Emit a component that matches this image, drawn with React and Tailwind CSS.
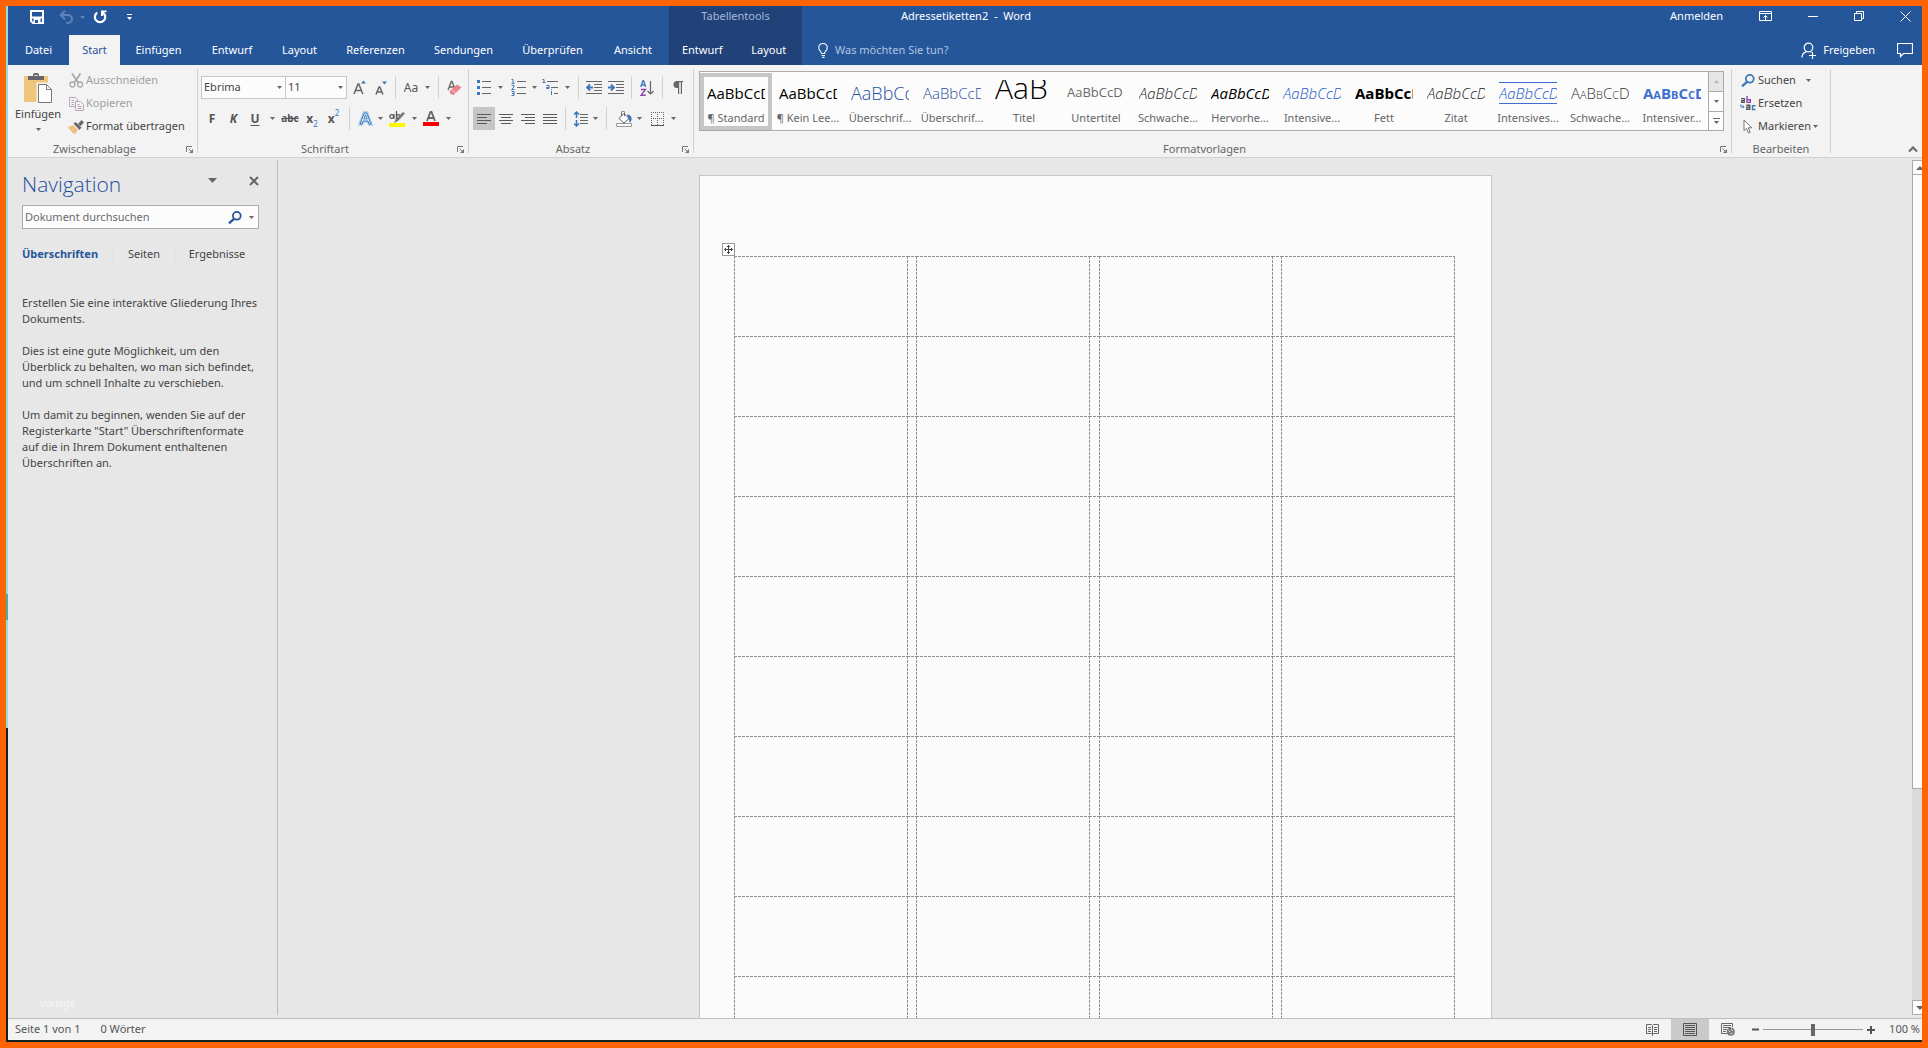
import React from 'react';

/* ---------- icons ---------- */

const Svg = ({ w = 16, h = 16, children, className = '' }) => (
  <svg width={w} height={h} viewBox={`0 0 ${w} ${h}`} fill="none" className={`shrink-0 ${className}`} aria-hidden="true">
    {children}
  </svg>
);

const Caret = ({ className = 'text-[#666]' }) => (
  <Svg w={5} h={3} className={className}>
    <path d="M0 0h5L2.5 3z" fill="currentColor" />
  </Svg>
);

const SaveIcon = () => (
  <Svg w={14} h={14}>
    <path d="M1 1h12v12H3l-2-2zM1.5 7.5h11" stroke="#fff" strokeWidth="2" />
    <path d="M3.500 8h7v5.500h-7z" fill="#fff" />
    <path d="M5 10h3v3H5z" fill="#26569a" />
  </Svg>
);

const UndoIcon = () => (
  <Svg w={15} h={14}>
    <path d="M1.500 5h7.500a4 4 0 0 1 0 8H7.500" stroke="#5f83b8" strokeWidth="2" />
    <path d="M6 .8 1.600 5 6 9.200" stroke="#5f83b8" strokeWidth="2" />
  </Svg>
);

const RedoIcon = () => (
  <Svg w={14} h={14}>
    <path d="M4.300 2.600a5.200 5.200 0 1 0 5.500 0" stroke="#fff" strokeWidth="2.200" />
    <path d="M8 .5h5.500v1.800H10V6H8z" fill="#fff" />
  </Svg>
);

const CustomizeIcon = () => (
  <Svg w={5} h={7}>
    <path d="M0 0h5v1H0zM0 3h5L2.500 6z" fill="#fff" />
  </Svg>
);

const RibbonOptionsIcon = () => (
  <Svg w={13} h={11}>
    <path d="M.5.500h12v9H.500zM.500 2.500h12" stroke="#fff" />
    <path d="M6.500 9V4.500M4.500 6.500l2-2 2 2" stroke="#fff" />
  </Svg>
);

const MinimizeIcon = () => (
  <Svg w={10} h={10}>
    <path d="M0 5.500h10" stroke="#fff" />
  </Svg>
);

const RestoreIcon = () => (
  <Svg w={10} h={10}>
    <path d="M.5 2.500h7v7h-7zM2.500 2V.500h7v7H8" stroke="#fff" />
  </Svg>
);

const CloseIcon = () => (
  <Svg w={11} h={11}>
    <path d="M.5.500l10 10M10.500.500l-10 10" stroke="#fff" />
  </Svg>
);

const BulbIcon = () => (
  <Svg w={10} h={15}>
    <path d="M3.500 10.500c0-2-2.800-2.800-2.800-5.800a4.300 4.300 0 0 1 8.600 0c0 3-2.800 3.800-2.800 5.800zM3.500 12.500h3.500M4 14.300h2.500" stroke="#e6edf7" strokeWidth="1.200" />
  </Svg>
);

const PersonIcon = () => (
  <Svg w={16} h={17}>
    <circle cx="7.500" cy="5.500" r="4.300" stroke="#fff" strokeWidth="1.200" />
    <path d="M1 15.500c0-3 1.800-5 4.500-5.800M9.500 9.700l1 .6M8 13.500h7M11.500 10v7" stroke="#fff" strokeWidth="1.200" />
  </Svg>
);

const CommentIcon = () => (
  <Svg w={16} h={15}>
    <path d="M.5.500h15v10H6.500l-3 3v-3h-3z" stroke="#fff" strokeWidth="1.200" />
  </Svg>
);

const PasteIcon = () => (
  <Svg w={28} h={31}>
    <path d="M0 3h24v26H0z" fill="#efc67b" />
    <path d="M4 3h5V1.500C9 .700 10 0 12 0s3 .700 3 1.500V3h5v4H4z" fill="#666" />
    <path d="M10.500 3V2h3v1z" fill="#f3f3f3" />
    <path d="M13.500 10.500h9.500l5 5v14.500H13.500z" fill="#f3f3f3" stroke="#f3f3f3" strokeWidth="2" />
    <path d="M14.500 11.500h8l5 5v13h-13z" fill="#fff" stroke="#777" />
    <path d="M22.500 11.500v5h5" stroke="#777" />
  </Svg>
);

const ScissorsIcon = () => (
  <Svg w={15} h={15}>
    <path d="M3 .500 9.500 10M11.500.500 5 10" stroke="#a9a9a9" strokeWidth="1.800" />
    <circle cx="3.400" cy="11.500" r="2.500" stroke="#a9a9a9" strokeWidth="1.300" />
    <circle cx="11.100" cy="11.500" r="2.500" stroke="#a9a9a9" strokeWidth="1.300" />
  </Svg>
);

const CopyIcon = () => (
  <Svg w={15} h={14}>
    <path d="M6 9.500H.500v-9h6l2 2V4" stroke="#b7a9b7" />
    <path d="M2.500 3.500H5M2.500 5.500H5M2.500 7.500H5" stroke="#b7a9b7" />
    <path d="M6.500 4.500h5l3 3v6h-8z" fill="#f5f3f5" stroke="#b7a9b7" />
    <path d="M8.500 7.500h2M8.500 9.500h4M8.500 11.500h4" stroke="#b7a9b7" />
  </Svg>
);

const BrushIcon = () => (
  <Svg w={16} h={14}>
    <path d="M0 7l5-2 5 5-3 4C4 13 2 10 0 7z" fill="#efc083" />
    <path d="M5.500 3.500 7.500 2l6 5.500-2 2.500z" fill="#666" />
    <path d="M10 4l3.500-4L16 2.500 12.500 6z" fill="#666" />
  </Svg>
);

const LauncherIcon = () => (
  <Svg w={7} h={7}>
    <path d="M.5 6V.500H6" stroke="#777" />
    <path d="M7 3v4H3z" fill="#777" />
    <path d="M2.500 2.500l3 3" stroke="#777" />
  </Svg>
);

const GrowIcon = () => (
  <Svg w={13} h={15}>
    <path d="M1 14 5 4h.800l4 10M2.500 10.500h6" stroke="#666" strokeWidth="1.500" />
    <path d="M8 3.500h5L10.500.500z" fill="#3b78b8" />
  </Svg>
);

const ShrinkIcon = () => (
  <Svg w={12} h={14}>
    <path d="M1 13.500 4 6h.800L8 13.500M2 11h5" stroke="#666" strokeWidth="1.500" />
    <path d="M7 .500h5L9.500 3.500z" fill="#3b78b8" />
  </Svg>
);

const EraserIcon = () => (
  <Svg w={15} h={16}>
    <path d="M1 10 4.300 1.500h.700L8 9M2 7h5" stroke="#666" strokeWidth="1.300" />
    <path d="M2.500 11 10 4.500l4.500 3-8 7.500-3-1z" fill="#ea8290" />
    <path d="M4.500 9.300l4 4" stroke="#f3f3f3" strokeWidth=".8" />
  </Svg>
);

const TextEffectsIcon = () => (
  <Svg w={15} h={15}>
    <path d="M1.500 13.500 6 1.500h3l4.500 12h-2.500l-1-3H5l-1 3z" fill="#f3f8fd" stroke="#a9cdee" strokeWidth="2.400" />
    <path d="M2 13 6.300 2h2.400L13 13h-2l-1-3H5l-1 3zM5.800 8h3.400L7.500 3.800z" fill="#f3f8fd" stroke="#3b78b8" />
  </Svg>
);

const HighlightIcon = () => (
  <Svg w={16} h={16}>
    <circle cx="2.700" cy="5.500" r="1.900" stroke="#555" strokeWidth="1.200" />
    <path d="M5 3v5M7.500 0v8" stroke="#555" strokeWidth="1.200" />
    <circle cx="9.300" cy="5.500" r="1.900" stroke="#555" strokeWidth="1.200" />
    <path d="M14 1l2 1.500L9 10l-4 2 1.500-3.500z" fill="#777" />
    <path d="M0 12h16v4H0z" fill="#fbf800" />
  </Svg>
);

const FontColorIcon = () => (
  <Svg w={16} h={15}>
    <path d="M4 10 7.500 1h1L12 10M5 7h6" stroke="#666" strokeWidth="1.800" />
    <path d="M0 11h16v4H0z" fill="#f40000" />
  </Svg>
);

const BulletsIcon = () => (
  <Svg w={14} h={15}>
    <path d="M0 0h3v3H0zM0 6h3v3H0zM0 12h3v3H0z" fill="#3b78b8" />
    <path d="M5 1.500h9M5 7.500h9M5 13.500h9" stroke="#666" />
  </Svg>
);

const NumbersIcon = () => (
  <Svg w={15} h={17}>
    <path d="M.5.500H2V4.500M.500 4.500h3M.500 6.500H3v1.500L.500 10.500H3.500M.500 12.500H3v4H.500M1 14.500h2" stroke="#3b78b8" />
    <path d="M6 2.500h9M6 8.500h9M6 14.500h9" stroke="#666" />
  </Svg>
);

const MultilevelIcon = () => (
  <Svg w={17} h={17}>
    <path d="M.5.500H2V3.500M.500 3.500h3M4.500 6.500H7v3H4.500V8.500H7M9.500 12v4M9.500 10v1" stroke="#3b78b8" />
    <path d="M5 2.500h11M9 8.500h7M12 14.500h4" stroke="#666" />
  </Svg>
);

const OutdentIcon = () => (
  <Svg w={16} h={14}>
    <path d="M0 .500h16M8 3.500h8M8 6.500h8M8 9.500h8M0 12.500h16" stroke="#666" />
    <path d="M7 6.500H1.500M4 3.500l-3 3 3 3" stroke="#3b78b8" strokeWidth="1.800" />
  </Svg>
);

const IndentIcon = () => (
  <Svg w={16} h={14}>
    <path d="M0 .500h16M8 3.500h8M8 6.500h8M8 9.500h8M0 12.500h16" stroke="#666" />
    <path d="M0 6.500h5.500M3 3.500l3 3-3 3" stroke="#3b78b8" strokeWidth="1.800" />
  </Svg>
);

const SortIcon = () => (
  <Svg w={14} h={16}>
    <path d="M.700 7 3 .500h.500L5.800 7M1.500 5h3.500" stroke="#3b78b8" strokeWidth="1.300" />
    <path d="M1 9.500h4.500L1 15.300h4.800" stroke="#9246b0" strokeWidth="1.400" />
    <path d="M10.500 1v13M7.500 11l3 3 3-3" stroke="#666" strokeWidth="1.200" />
  </Svg>
);

const PilcrowIcon = () => (
  <Svg w={10} h={13}>
    <path d="M4 0h6v1.200H9V13H7.800V1.200H6.200V13H5V7H4A3.500 3.500 0 0 1 4 0z" fill="#666" />
  </Svg>
);

const AlignIcon = ({ kind }) => {
  const d = {
    left: 'M0 .500h14M0 3.500h10M0 6.500h14M0 9.500h10',
    center: 'M0 .500h14M2 3.500h10M0 6.500h14M2 9.500h10',
    right: 'M0 .500h14M4 3.500h10M0 6.500h14M4 9.500h10',
    justify: 'M0 .500h14M0 3.500h14M0 6.500h14M0 9.500h14',
  }[kind];
  return (
    <Svg w={14} h={10}>
      <path d={d} stroke="#5a5a5a" />
    </Svg>
  );
};

const SpacingIcon = () => (
  <Svg w={14} h={16}>
    <path d="M2.500 1v14M0 3.500 2.500 1 5 3.500M0 12.500 2.500 15 5 12.500" stroke="#3b78b8" strokeWidth="1.500" />
    <path d="M1 7h3v2H1z" fill="#f3f3f3" />
    <path d="M6 3.500h8M6 6.500h8M6 9.500h8M6 12.500h8" stroke="#666" />
  </Svg>
);

const BucketIcon = () => (
  <Svg w={16} h={16}>
    <path d="M3 7.500 8 2.500l5 5-5 4.500z" fill="#fff" stroke="#666" />
    <path d="M5.500 5V1.500a1.500 1.500 0 0 1 3 0V5" stroke="#666" />
    <path d="M11 3.500c3.500 0 5 2.500 4.500 5.500l-1.500 3-1.500-4z" fill="#3b78b8" />
    <path d="M.5 12.500h15v3H.500z" fill="#fff" stroke="#999" />
  </Svg>
);

const BordersIcon = () => (
  <Svg w={13} h={14}>
    <path d="M0 .500h13M0 6.500h13M.500 0v13M6.500 0v13M12.500 0v13" stroke="#666" strokeDasharray="1 1" />
    <path d="M0 13.500h13" stroke="#555" />
  </Svg>
);

const MagnifierIcon = ({ color = '#3b78b8' }) => (
  <Svg w={14} h={13}>
    <circle cx="8.800" cy="4.800" r="3.900" stroke={color} strokeWidth="1.800" />
    <path d="M6 7.800 1 12.300" stroke={color} strokeWidth="2.400" />
  </Svg>
);

const ReplaceIcon = () => (
  <Svg w={16} h={15}>
    <path d="M1 2.700h3.300V7M4.300 4.700H1.700V6.400H4.300" stroke="#555" strokeWidth="1.300" />
    <path d="M7 0v7M7 3.700h3.300v2.700H7" stroke="#9246b0" strokeWidth="1.400" />
    <path d="M6.300 9.200h3.400V14M9.700 11.200H6.800v2.200h2.900" stroke="#555" strokeWidth="1.400" />
    <path d="M15.500 9.700h-3v3.800h3" stroke="#3b78b8" strokeWidth="1.400" />
    <path d="M.800 8.500v2.300h3M2.500 9.300 4 10.800l-1.500 1.500" stroke="#3b78b8" />
  </Svg>
);

const CursorIcon = () => (
  <Svg w={10} h={15}>
    <path d="M1 1v10.500l2.500-2 2 4.500 1.700-.800-2-4.400H8.800z" fill="#fff" stroke="#777" />
  </Svg>
);

const CollapseIcon = () => (
  <Svg w={10} h={7}>
    <path d="M1 5.500 5 1.500l4 4" stroke="#666" strokeWidth="2" />
  </Svg>
);

const MoveIcon = () => (
  <Svg w={9} h={9}>
    <path d="M4.500 0v9M0 4.500h9M3 1.500h3M3 7.500h3M1.500 3v3M7.500 3v3" stroke="#444" />
  </Svg>
);

const ReadIcon = () => (
  <Svg w={13} h={13}>
    <path d="M.5 1.500h5l1 1 1-1h5v9h-5l-1 1-1-1h-5zM6.500 2v11M2 4.500h3M2 6.500h3M2 8.500h3M8 4.500h3M8 6.500h3M8 8.500h3" stroke="#666" />
  </Svg>
);

const PrintViewIcon = () => (
  <Svg w={14} h={13}>
    <path d="M.5.500h13v12H.500zM2 2.500h10M2 4.500h10M2 6.500h10M2 8.500h10M2 10.500h10" stroke="#555" />
  </Svg>
);

const WebViewIcon = () => (
  <Svg w={14} h={13}>
    <path d="M11.500 4V.500H.500v10H6M2 2.500h8M2 4.500h8M2 6.500h4M2 8.500h3" stroke="#666" />
    <circle cx="9.800" cy="8.800" r="4" fill="#777" />
    <path d="M7.500 7.500l2 1.500M10 6l2 2M9.500 11l2-.800" stroke="#e8e8e8" />
  </Svg>
);

/* ---------- small building blocks ---------- */

const Sep = ({ slot }) => (
  <span className={`flex h-[23px] justify-center ${slot}`}>
    <span className="w-px bg-[#d2d2d2]" />
  </span>
);

const Tool = ({ label, slot, children, active }) => (
  <button
    type="button"
    aria-label={label}
    className={`flex h-[23px] shrink-0 items-center justify-center ${slot} ${active ? 'bg-[#c6c6c6]' : ''}`}
  >
    {children}
  </button>
);

const Group = ({ label, launcher = true, className, children }) => (
  <section aria-label={label} className={`flex flex-col ${className}`}>
    <div className="h-[72px]">{children}</div>
    <div className="flex h-4 items-center">
      <span className="flex-1 text-center text-[#666]">{label}</span>
      {launcher && (
        <button type="button" aria-label={`${label} – Optionen`} className="flex w-4 justify-center">
          <LauncherIcon />
        </button>
      )}
    </div>
  </section>
);

const GroupLine = () => <div className="mb-1 w-px bg-[#d2d2d2]" />;

const SmallCommand = ({ icon, label, muted, caret, caretGap = 'ml-1' }) => (
  <button type="button" className={`flex h-[23px] items-center ${muted ? 'text-[#a0a0a0]' : 'text-[#444]'}`}>
    <span className="mr-0.5 flex w-4 justify-center">{icon}</span>
    {label}
    {caret && <span className={caretGap}><Caret /></span>}
  </button>
);

/* ---------- header ---------- */

const tabs = [
  ['Datei', 'w-[61px]'],
  ['Start', 'w-[51px]'],
  ['Einfügen', 'w-[77px]'],
  ['Entwurf', 'w-[70px]'],
  ['Layout', 'w-[65px]'],
  ['Referenzen', 'w-[87px]'],
  ['Sendungen', 'w-[89px]'],
  ['Überprüfen', 'w-[89px]'],
  ['Ansicht', 'w-[72px]'],
];

const Header = () => (
  <header className="flex h-[59px] shrink-0 bg-[#26569a] text-white">
    <div className="flex flex-col justify-between">
      <div className="flex h-[22px] items-center pl-[22px]">
        <button type="button" aria-label="Speichern"><SaveIcon /></button>
        <button type="button" aria-label="Rückgängig" className="ml-[15px]"><UndoIcon /></button>
        <button type="button" aria-label="Rückgängig-Liste" className="ml-1.5"><Caret className="text-[#5f83b8]" /></button>
        <button type="button" aria-label="Wiederholen" className="ml-2"><RedoIcon /></button>
        <button type="button" aria-label="Schnellzugriff anpassen" className="ml-5"><CustomizeIcon /></button>
      </div>
      <nav aria-label="Menüband" className="flex h-[30px]">
        {tabs.map(([name, width]) => (
          <button
            key={name}
            type="button"
            className={`${width} ${name === 'Start' ? 'bg-[#f3f3f3] text-[#26569a]' : ''}`}
          >
            {name}
          </button>
        ))}
      </nav>
    </div>
    <div className="flex w-[133px] flex-col justify-between bg-[#214279]">
      <p className="flex h-5 items-center justify-center text-[#a3b8d8]">Tabellentools</p>
      <div className="flex h-[30px]">
        <button type="button" className="flex-1">Entwurf</button>
        <button type="button" className="flex-1">Layout</button>
      </div>
    </div>
    <div className="flex flex-1 flex-col justify-between">
      <div className="flex h-5 items-center">
        <h1 className="pl-[99px] whitespace-pre">Adressetiketten2  -  Word</h1>
        <a href="#anmelden" className="mr-9 ml-auto">Anmelden</a>
        <button type="button" aria-label="Menüband-Anzeigeoptionen" className="mr-9"><RibbonOptionsIcon /></button>
        <button type="button" aria-label="Minimieren" className="mr-9"><MinimizeIcon /></button>
        <button type="button" aria-label="Wiederherstellen" className="mr-9"><RestoreIcon /></button>
        <button type="button" aria-label="Schließen" className="mr-[11px]"><CloseIcon /></button>
      </div>
      <div className="flex h-[30px] items-center">
        <label className="flex items-center gap-[7px] pl-4">
          <BulbIcon />
          <input type="text" aria-label="Was möchten Sie tun?" placeholder="Was möchten Sie tun?" className="w-40 bg-transparent outline-none placeholder:text-[#b3c4e0]" />
        </label>
        <button type="button" className="mr-[22px] ml-auto flex items-center gap-1.5">
          <PersonIcon />
          Freigeben
        </button>
        <button type="button" aria-label="Kommentare" className="mr-[9px]"><CommentIcon /></button>
      </div>
    </div>
  </header>
);

/* ---------- ribbon ---------- */

const Combo = ({ id, label, value, width, border }) => (
  <div className={`relative flex h-[23px] items-center ${width}`}>
    <select id={id} aria-label={label} className={`h-full w-full appearance-none border-[#c6c6c6] bg-[#fcfcfc] pl-0.5 text-[#444] ${border}`}>
      <option>{value}</option>
    </select>
    <span className="pointer-events-none absolute right-1"><Caret /></span>
  </div>
);

const styles = [
  ['¶ Standard', 'text-[15px] text-black', 'AaBbCcD'],
  ['¶ Kein Lee...', 'text-[15px] text-black', 'AaBbCcD'],
  ['Überschrif...', 'text-lg font-light text-[#1f4e9e]', 'AaBbCc'],
  ['Überschrif...', 'text-[15px] font-light text-[#1f4e9e]', 'AaBbCcD'],
  ['Titel', 'self-start text-[30px] leading-4 font-light text-black', 'AaB'],
  ['Untertitel', 'text-[13px] text-[#6a6a6a]', 'AaBbCcD'],
  ['Schwache...', 'text-[15px] italic font-light text-[#222]', 'AaBbCcD'],
  ['Hervorhe...', 'text-[15px] italic text-black', 'AaBbCcD'],
  ['Intensive...', 'text-[15px] italic font-light text-[#2057c4]', 'AaBbCcD'],
  ['Fett', 'text-[15px] font-bold text-black', 'AaBbCcD'],
  ['Zitat', 'text-[15px] italic font-light text-[#222]', 'AaBbCcD'],
  ['Intensives...', 'text-[15px] italic font-light text-[#2057c4]', 'AaBbCcD', true],
  ['Schwache...', 'text-[15px] font-light text-[#333] [font-variant:small-caps]', 'AaBbCcD'],
  ['Intensiver...', 'text-[15px] font-bold text-[#3c6fce] [font-variant:small-caps]', 'AaBbCcD'],
];

const Gallery = () => (
  <div className="mt-0.5 mr-[7px] ml-[5px] flex h-[60px] border border-[#ababab] bg-[#fcfcfc]">
    <div className="flex flex-1 overflow-hidden pt-px">
      {styles.map(([name, look, sample, ruled], i) => (
        <button
          key={i}
          type="button"
          className={`flex h-[57px] w-[72px] shrink-0 flex-col items-center border-4 ${i === 0 ? 'border-[#c6c6c6]' : 'border-transparent'}`}
        >
          <span className={`flex w-[58px] shrink-0 items-center overflow-hidden whitespace-nowrap font-['Open_Sans',sans-serif] ${ruled ? 'mt-[5px] mb-0.5 h-[22px] border-y border-[#3c6fce]' : 'mt-[3px] h-[26px]'}`}>
            <span className={look}>{sample}</span>
          </span>
          <span className="mt-1 h-4 leading-4 whitespace-nowrap text-[#666]">{name}</span>
        </button>
      ))}
    </div>
    <div className="flex w-[15px] flex-col divide-y divide-[#ababab] border-l border-[#ababab]">
      <button type="button" aria-label="Nach oben" className="flex h-5 items-center justify-center bg-[#e6e6e6]">
        <span className="rotate-180"><Caret className="text-[#b5b5b5]" /></span>
      </button>
      <button type="button" aria-label="Nach unten" className="flex flex-1 items-center justify-center"><Caret /></button>
      <button type="button" aria-label="Weitere" className="flex flex-1 flex-col items-center justify-center gap-0.5">
        <span className="h-px w-[7px] bg-[#666]" />
        <Caret />
      </button>
    </div>
  </div>
);

const Ribbon = () => (
  <div className="flex h-[93px] shrink-0 border-b border-[#d2d2d2] bg-[#f3f3f3] pt-1 text-[#444]">
    <Group label="Zwischenablage" className="w-[189px]">
      <div className="flex">
        <button type="button" className="flex w-[60px] flex-col items-center pt-1 pr-2 pl-2">
          <PasteIcon />
          <span className="mt-0.5 leading-4">Einfügen</span>
          <span className="mt-1.5"><Caret /></span>
        </button>
        <div className="flex flex-col items-start">
          <SmallCommand icon={<ScissorsIcon />} label="Ausschneiden" muted />
          <SmallCommand icon={<CopyIcon />} label="Kopieren" muted />
          <SmallCommand icon={<BrushIcon />} label="Format übertragen" />
        </div>
      </div>
    </Group>
    <GroupLine />
    <Group label="Schriftart" className="w-[270px]">
      <div className="flex flex-col gap-2 pt-[7px] pl-[3px]">
        <div className="flex">
          <Combo id="font" label="Schriftart" value="Ebrima" width="w-[85px]" border="border" />
          <Combo id="size" label="Schriftgrad" value="11" width="w-[61px]" border="border-y border-r" />
          <Tool label="Schriftgrad vergrößern" slot="w-6"><GrowIcon /></Tool>
          <Tool label="Schriftgrad verkleinern" slot="w-5"><ShrinkIcon /></Tool>
          <Sep slot="w-2" />
          <Tool label="Groß-/Kleinschreibung" slot="w-6"><span className="text-xs text-[#555]">Aa</span></Tool>
          <Tool label="Groß-/Kleinschreibung – Liste" slot="w-2"><Caret /></Tool>
          <Sep slot="w-3.5" />
          <Tool label="Formatierung löschen" slot="w-[18px]"><EraserIcon /></Tool>
        </div>
        <div className="flex text-[#555]">
          <Tool label="Fett" slot="w-[22px]"><b className="text-xs">F</b></Tool>
          <Tool label="Kursiv" slot="w-[21px]"><b className="text-xs italic">K</b></Tool>
          <Tool label="Unterstreichen" slot="w-[22px]"><b className="text-xs underline underline-offset-2">U</b></Tool>
          <Tool label="Unterstreichen – Liste" slot="w-3"><Caret /></Tool>
          <Tool label="Durchgestrichen" slot="w-6"><s className="text-[10px] font-bold">abc</s></Tool>
          <Tool label="Tiefgestellt" slot="w-5"><b className="text-xs">x</b><span className="self-end text-[8px] text-[#3b78b8]">2</span></Tool>
          <Tool label="Hochgestellt" slot="w-[23px]"><b className="text-xs">x</b><span className="self-start text-[8px] text-[#3b78b8]">2</span></Tool>
          <Sep slot="w-2" />
          <Tool label="Texteffekte" slot="w-6"><TextEffectsIcon /></Tool>
          <Tool label="Texteffekte – Liste" slot="w-1.5"><Caret /></Tool>
          <Tool label="Texthervorhebungsfarbe" slot="w-7"><HighlightIcon /></Tool>
          <Tool label="Texthervorhebungsfarbe – Liste" slot="w-1.5"><Caret /></Tool>
          <Tool label="Schriftfarbe" slot="w-7"><FontColorIcon /></Tool>
          <Tool label="Schriftfarbe – Liste" slot="w-1.5"><Caret /></Tool>
        </div>
      </div>
    </Group>
    <GroupLine />
    <Group label="Absatz" className="w-[224px]">
      <div className="flex flex-col gap-2 pt-[7px] pl-1">
        <div className="flex">
          <Tool label="Aufzählungszeichen" slot="w-[22px]"><BulletsIcon /></Tool>
          <Tool label="Aufzählungszeichen – Liste" slot="w-2.5"><Caret /></Tool>
          <Tool label="Nummerierung" slot="w-[26px]"><NumbersIcon /></Tool>
          <Tool label="Nummerierung – Liste" slot="w-1.5"><Caret /></Tool>
          <Tool label="Liste mit mehreren Ebenen" slot="w-[27px]"><MultilevelIcon /></Tool>
          <Tool label="Liste mit mehreren Ebenen – Liste" slot="w-1.5"><Caret /></Tool>
          <Sep slot="w-4" />
          <Tool label="Einzug verkleinern" slot="w-4"><OutdentIcon /></Tool>
          <Tool label="Einzug vergrößern" slot="w-[27px]"><IndentIcon /></Tool>
          <Sep slot="w-1" />
          <Tool label="Sortieren" slot="w-7"><SortIcon /></Tool>
          <Sep slot="w-0.5" />
          <Tool label="Absatzmarken anzeigen" slot="w-[30px]"><PilcrowIcon /></Tool>
        </div>
        <div className="flex">
          <Tool label="Linksbündig" slot="w-[22px]" active><AlignIcon kind="left" /></Tool>
          <Tool label="Zentriert" slot="w-[22px]"><AlignIcon kind="center" /></Tool>
          <Tool label="Rechtsbündig" slot="w-[22px]"><AlignIcon kind="right" /></Tool>
          <Tool label="Blocksatz" slot="w-[22px]"><AlignIcon kind="justify" /></Tool>
          <Sep slot="w-2" />
          <Tool label="Zeilenabstand" slot="w-[23px]"><SpacingIcon /></Tool>
          <Tool label="Zeilenabstand – Liste" slot="w-1.5"><Caret /></Tool>
          <Sep slot="w-[17px]" />
          <Tool label="Schattierung" slot="w-[18px]"><BucketIcon /></Tool>
          <Tool label="Schattierung – Liste" slot="w-3"><Caret /></Tool>
          <Tool label="Rahmen" slot="w-6"><BordersIcon /></Tool>
          <Tool label="Rahmen – Liste" slot="w-2"><Caret /></Tool>
        </div>
      </div>
    </Group>
    <GroupLine />
    <Group label="Formatvorlagen" className="min-w-0 flex-1">
      <Gallery />
    </Group>
    <GroupLine />
    <Group label="Bearbeiten" launcher={false} className="w-[98px]">
      <div className="flex flex-col items-start pl-2">
        <SmallCommand icon={<MagnifierIcon />} label="Suchen" caret caretGap="ml-2.5" />
        <SmallCommand icon={<ReplaceIcon />} label="Ersetzen" />
        <SmallCommand icon={<CursorIcon />} label="Markieren" caret caretGap="ml-0.5" />
      </div>
    </Group>
    <GroupLine />
    <div className="flex w-[91px] items-end justify-end pr-1 pb-1">
      <button type="button" aria-label="Menüband reduzieren"><CollapseIcon /></button>
    </div>
  </div>
);

/* ---------- navigation pane ---------- */

const NavigationPane = () => (
  <aside className="mt-0.5 mb-[3px] flex w-[270px] shrink-0 flex-col border-r border-[#bdbdbd] px-3.5 text-[#444]">
    <div className="flex h-[45px] items-center pt-1">
      <h2 className="font-['Open_Sans',sans-serif] text-[21px] font-light text-[#1f4e9e]">Navigation</h2>
      <button type="button" aria-label="Aufgabenbereichsoptionen" className="mr-8 mb-2 ml-auto">
        <Svg w={9} h={5}><path d="M0 0h9L4.500 5z" fill="#666" /></Svg>
      </button>
      <button type="button" aria-label="Bereich schließen" className="mr-1 mb-2">
        <Svg w={10} h={10}><path d="M1 1l8 8M9 1 1 9" stroke="#666" strokeWidth="2" /></Svg>
      </button>
    </div>
    <div className="mr-1 flex h-6 items-center border border-[#ababab] bg-[#fcfcfc] pr-1">
      <input type="search" aria-label="Dokument durchsuchen" placeholder="Dokument durchsuchen" className="min-w-0 flex-1 bg-transparent pl-0.5 outline-none placeholder:text-[#6a6a6a]" />
      <button type="button" aria-label="Suchen"><MagnifierIcon color="#26569a" /></button>
      <button type="button" aria-label="Suchoptionen" className="ml-[7px]"><Caret /></button>
    </div>
    <div className="mt-[15px] flex h-5 items-center">
      <button type="button" className="w-[90px] text-left font-bold text-[#26569a]">Überschriften</button>
      <span className="h-5 w-px bg-[#e2e2e2]" />
      <button type="button" className="w-[62px] text-center">Seiten</button>
      <span className="h-5 w-px bg-[#e2e2e2]" />
      <button type="button" className="w-[82px] text-center">Ergebnisse</button>
    </div>
    <div className="mt-[31px] flex w-[239px] flex-col gap-4 leading-4">
      <p>Erstellen Sie eine interaktive Gliederung Ihres Dokuments.</p>
      <p>Dies ist eine gute Möglichkeit, um den Überblick zu behalten, wo man sich befindet, und um schnell Inhalte zu verschieben.</p>
      <p>Um damit zu beginnen, wenden Sie auf der Registerkarte "Start" Überschriftenformate auf die in Ihrem Dokument enthaltenen Überschriften an.</p>
    </div>
    <p className="mt-auto mb-1 pl-[18px] text-[10px] text-[#f6f6f6]">vorlage</p>
  </aside>
);

/* ---------- document ---------- */

const rows = Array.from({ length: 10 }, (_, i) => i);
const cols = ['w-[173px]', 'w-[9px]', 'w-[173px]', 'w-[10px]', 'w-[173px]', 'w-[9px]', 'w-[174px]'];

const DocumentArea = () => (
  <main className="flex min-w-0 flex-1 justify-center overflow-hidden">
    <div className="mt-[17px] h-[1123px] w-[793px] shrink-0 border border-[#c6c6c6] bg-[#fbfbfb] pt-20 pl-[34px]">
      <div className="relative w-[721px]">
        <button type="button" aria-label="Tabelle verschieben" className="absolute -top-[13px] -left-3 flex size-[13px] items-center justify-center border border-[#999] bg-white">
          <MoveIcon />
        </button>
        <table aria-label="Adressetiketten" className="w-full table-fixed border-collapse [background:repeating-linear-gradient(180deg,#909090_0_3px,transparent_3px_4px)_right/1px_100%_no-repeat]">
          <colgroup>
            {cols.map((c, i) => <col key={i} className={c} />)}
          </colgroup>
          <tbody>
            {rows.map((r) => (
              <tr key={r} className="h-20">
                {cols.map((_, i) => (
                  <td key={i} className="p-0 [background:repeating-linear-gradient(90deg,#909090_0_3px,transparent_3px_4px)_top/100%_1px_no-repeat,repeating-linear-gradient(180deg,#909090_0_3px,transparent_3px_4px)_left/1px_100%_no-repeat]" />
                ))}
              </tr>
            ))}
          </tbody>
        </table>
      </div>
    </div>
  </main>
);

const ScrollBar = () => (
  <div className="mt-0.5 mb-[3px] flex w-2.5 shrink-0 flex-col bg-[#dadada]">
    <button type="button" aria-label="Nach oben blättern" className="flex h-[15px] items-center justify-end border-y border-l border-[#ababab] bg-[#fcfcfc]">
      <Svg w={6} h={4}><path d="M0 4l4-4 2 2v2z" fill="#666" /></Svg>
    </button>
    <div className="h-[614px] border-b border-l border-[#ababab] bg-[#fcfcfc]" />
    <button type="button" aria-label="Nach unten blättern" className="mt-auto flex h-[15px] items-center justify-end border-y border-l border-[#ababab] bg-[#fcfcfc]">
      <Svg w={6} h={4}><path d="M0 0l4 4 2-2V0z" fill="#666" /></Svg>
    </button>
  </div>
);

/* ---------- status bar ---------- */

const StatusBar = () => (
  <footer className="flex h-6 shrink-0 items-center border-t border-b-2 border-t-[#bdbdbd] border-b-[#14201f] bg-[#f3f3f3] text-[#555]">
    <span className="pl-[7px]">Seite 1 von 1</span>
    <span className="pl-5">0 Wörter</span>
    <div className="ml-auto flex h-full items-center">
      <button type="button" aria-label="Lesemodus" className="flex h-full w-[38px] items-center justify-center"><ReadIcon /></button>
      <button type="button" aria-label="Seitenlayout" className="flex h-full w-[38px] items-center justify-center bg-[#cacaca]"><PrintViewIcon /></button>
      <button type="button" aria-label="Weblayout" className="flex h-full w-[38px] items-center justify-center"><WebViewIcon /></button>
      <button type="button" aria-label="Verkleinern" className="ml-[5px] flex w-[7px]"><Svg w={7} h={3}><path d="M0 .500h7v2H0z" fill="#555" /></Svg></button>
      <input
        type="range"
        min="0"
        max="200"
        defaultValue="100"
        aria-label="Zoom"
        className="mx-1 h-3 w-[100px] appearance-none bg-transparent [&::-webkit-slider-runnable-track]:h-3 [&::-webkit-slider-runnable-track]:[background:linear-gradient(#999,#999)_center/100%_1px_no-repeat] [&::-webkit-slider-thumb]:h-3 [&::-webkit-slider-thumb]:w-1 [&::-webkit-slider-thumb]:appearance-none [&::-webkit-slider-thumb]:bg-[#666]"
      />
      <button type="button" aria-label="Vergrößern" className="flex w-2"><Svg w={8} h={8}><path d="M0 3h8v2H0zM3 0h2v8H3z" fill="#555" /></Svg></button>
      <span className="w-[47px] pr-0.5 text-right whitespace-nowrap">100 %</span>
    </div>
  </footer>
);

export default function App() {
  return (
    <div className="flex h-screen overflow-hidden border-6 border-[#ff6404] font-['Noto_Sans',sans-serif] text-[11px]">
      <div className="flex w-0.5 shrink-0 flex-col bg-[#14201f]">
        <div className="h-[588px] bg-[#90dfe4]" />
        <div className="h-[26px] bg-[#4fae9a]" />
        <div className="h-[108px] bg-[#90dfe4]" />
      </div>
      <div className="flex min-w-0 flex-1 flex-col bg-[#e7e7e7]">
        <Header />
        <Ribbon />
        <div className="flex min-h-0 flex-1">
          <NavigationPane />
          <DocumentArea />
          <ScrollBar />
        </div>
        <StatusBar />
      </div>
    </div>
  );
}
